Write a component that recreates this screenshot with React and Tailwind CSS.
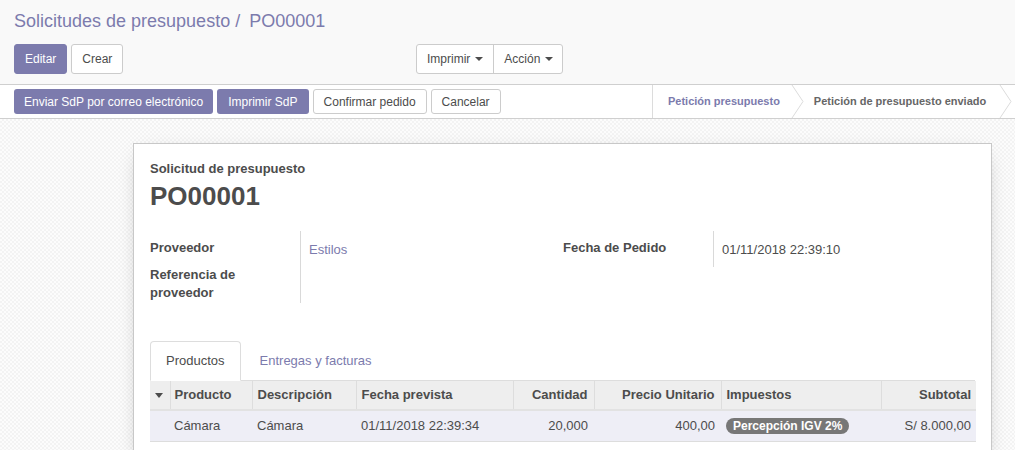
import React from "react";

const Caret = () => (
  <span className="inline-block ml-[5px] align-middle w-0 h-0 border-l-[4px] border-r-[4px] border-t-[4px] border-l-transparent border-r-transparent border-t-[#4c4c4c]" />
);

const Chevron = () => (
  <svg width="14" height="33" viewBox="0 0 14 33" className="shrink-0">
    <polyline points="1,0 12,16.5 1,33" fill="none" stroke="#dcdcdc" strokeWidth="1" />
  </svg>
);

export default function App() {
  return (
    <div className="min-h-[450px] w-[1015px] overflow-hidden text-[13px] text-[#4c4c4c]" style={{ fontFamily: '"Liberation Sans", Arial, sans-serif' }}>
      {/* Control panel */}
      <div className="h-[85px] bg-[#f9f9f9] border-b border-[#cfcfcf] px-[14px] pt-[9px]">
        <div className="text-[18px] leading-[24px] text-[#7c7bad] whitespace-nowrap">
          Solicitudes de presupuesto<span className="text-[#7c7bad]"> / </span>
          <span className="text-[#7c7bad] ml-[4px]">PO00001</span>
        </div>
        <div className="mt-[11px] flex items-center">
          <div className="flex gap-[4px] w-[402px]">
            <button className="h-[30px] px-[10px] bg-[#7c7bad] text-white rounded-[3px] border border-[#7c7bad] text-[12px]">Editar</button>
            <button className="h-[30px] px-[10px] bg-white text-[#4c4c4c] rounded-[3px] border border-[#cccccc] text-[12px]">Crear</button>
          </div>
          <div className="flex h-[30px] bg-white border border-[#cccccc] rounded-[3px] text-[12px]">
            <button className="px-[10px] border-r border-[#cccccc] flex items-center">Imprimir<Caret /></button>
            <button className="pl-[10px] pr-[9px] flex items-center">Acción<Caret /></button>
          </div>
        </div>
      </div>

      {/* Status bar */}
      <div className="h-[34px] bg-white border-b border-[#cfcfcf] flex items-stretch">
        <div className="flex gap-[4px] pl-[14px] pt-[4px] whitespace-nowrap">
          <button className="h-[25px] px-[10px] bg-[#7c7bad] text-white rounded-[3px] text-[12px]">Enviar SdP por correo electrónico</button>
          <button className="h-[25px] px-[11px] bg-[#7c7bad] text-white rounded-[3px] text-[12px]">Imprimir SdP</button>
          <button className="h-[25px] px-[10px] bg-white border border-[#cccccc] rounded-[3px] text-[12px]">Confirmar pedido</button>
          <button className="h-[25px] px-[10px] bg-white border border-[#cccccc] rounded-[3px] text-[12px]">Cancelar</button>
        </div>
        <div className="ml-auto flex items-stretch border-l border-[#dcdcdc] w-[363px] shrink-0 whitespace-nowrap">
          <div className="flex items-center pl-[15px] text-[11px] font-bold text-[#7c7bad]">Petición presupuesto</div>
          <div className="ml-[11px] flex items-center"><Chevron /></div>
          <div className="flex items-center pl-[9px] text-[11px] font-bold text-[#666666]">Petición de presupuesto enviado</div>
          <div className="ml-[13px] flex items-center"><Chevron /></div>
        </div>
      </div>

      {/* Content */}
      <div className="h-[331px] bg-[repeating-conic-gradient(#f3f3f3_0%_25%,#fcfcfc_0%_50%)] bg-[length:4px_4px] pt-[24px]">
        <div className="ml-[133px] w-[859px] h-[320px] bg-white border border-[#c8c8c8] shadow-[0_5px_20px_-10px_rgba(0,0,0,0.4)] pl-[16px] pr-[16px] pt-[16px]">
          <div className="text-[13px] font-bold text-[#4c4c4c] leading-[18px]">Solicitud de presupuesto</div>
          <div className="text-[26px] font-bold text-[#4c4c4c] leading-[34px] mt-[1px]">PO00001</div>

          <div className="mt-[26px] flex">
            <div className="w-[413px] flex">
              <div className="w-[150px] font-bold leading-[18px] text-[13px]">
                <div>Proveedor</div>
                <div className="mt-[9px] w-[110px]">Referencia de proveedor</div>
              </div>
              <div className="border-l border-[#d9d9d9] h-[72px] mt-[-8px] pl-[8px] pt-[10px] text-[#7c7bad] leading-[18px]">Estilos</div>
            </div>
            <div className="flex">
              <div className="w-[150px] font-bold leading-[18px]">
                <div>Fecha de Pedido</div>
              </div>
              <div className="border-l border-[#d9d9d9] h-[36px] mt-[-8px] pl-[8px] pt-[10px] leading-[18px]">01/11/2018 22:39:10</div>
            </div>
          </div>

          {/* Tabs */}
          <div className="mt-[38px] flex border-b border-[#dddddd] h-[40px]">
            <div className="h-[40px] px-[15px] flex items-center border border-[#dddddd] border-b-white rounded-t-[4px] bg-white -mb-[1px]">Productos</div>
            <div className="h-[40px] px-[19px] flex items-center text-[#7c7bad]">Entregas y facturas</div>
          </div>

          {/* Table */}
          <table className="w-[826px] border-collapse">
            <thead>
              <tr className="h-[29px] bg-[#eeeeee] font-bold">
                <th className="w-[20px] border-r border-[#dddddd] p-0 text-left pl-[5px]">
                  <span className="inline-block w-0 h-0 border-l-[4px] border-r-[4px] border-t-[5px] border-l-transparent border-r-transparent border-t-[#4c4c4c] align-middle" />
                </th>
                <th className="w-[82px] text-left pl-[4px] border-r border-[#dddddd] font-bold">Producto</th>
                <th className="w-[104px] text-left pl-[5px] border-r border-[#dddddd] font-bold">Descripción</th>
                <th className="w-[157px] text-left pl-[5px] border-r border-[#dddddd] font-bold">Fecha prevista</th>
                <th className="w-[81px] text-right pr-[6px] border-r border-[#dddddd] font-bold">Cantidad</th>
                <th className="w-[127px] text-right pr-[6px] border-r border-[#dddddd] font-bold">Precio Unitario</th>
                <th className="w-[160px] text-left pl-[5px] border-r border-[#dddddd] font-bold">Impuestos</th>
                <th className="text-right pr-[5px] font-bold">Subtotal</th>
              </tr>
            </thead>
            <tbody>
              <tr className="h-[31px] bg-[#eeeef6] border-t-2 border-[#e2e2e2] border-b border-b-[#dddddd]">
                <td></td>
                <td className="pl-[4px]">Cámara</td>
                <td className="pl-[5px]">Cámara</td>
                <td className="pl-[5px]">01/11/2018 22:39:34</td>
                <td className="text-right pr-[6px]">20,000</td>
                <td className="text-right pr-[6px]">400,00</td>
                <td className="pl-[5px]">
                  <span className="inline-block bg-[#777777] text-white text-[12px] font-bold rounded-full px-[7px] leading-[16px]">Percepción IGV 2%</span>
                </td>
                <td className="text-right pr-[5px]">S/ 8.000,00</td>
              </tr>
            </tbody>
          </table>
        </div>
      </div>
    </div>
  );
}
